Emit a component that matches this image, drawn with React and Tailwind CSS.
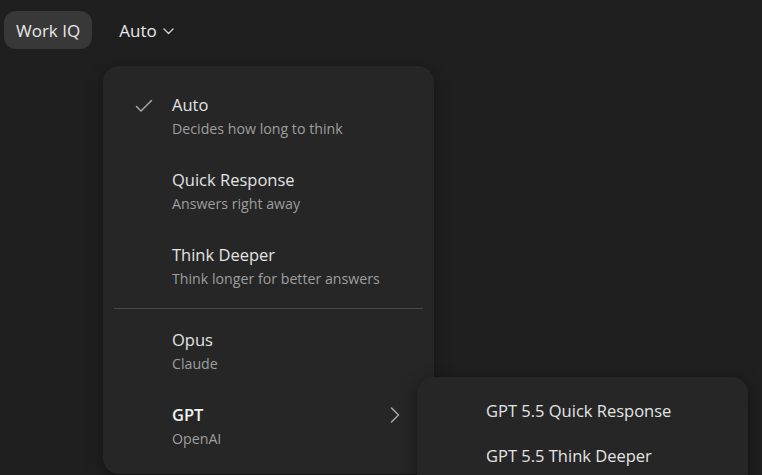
import React from 'react';

const font = { fontFamily: '"Segoe UI", "Open Sans", "Noto Sans", sans-serif' };

const items = [
  { title: 'Auto', sub: 'Decides how long to think', checked: true },
  { title: 'Quick Response', sub: 'Answers right away' },
  { title: 'Think Deeper', sub: 'Think longer for better answers' },
];

const models = [
  { title: 'Opus', sub: 'Claude' },
  { title: 'GPT', sub: 'OpenAI', bold: true, more: true },
];

function Check() {
  return (
    <svg width="18" height="14" viewBox="0 0 18 14" fill="none" stroke="#a6a6a6" strokeWidth="1.5" strokeLinecap="round" strokeLinejoin="round">
      <path d="M1.5 7.5 L6 12 L16.5 1.5" />
    </svg>
  );
}

function MenuItem({ item }) {
  return (
    <div className="flex h-[75px] items-center">
      <div className="flex w-[69px] justify-end pr-[19px] pb-[22px]">
        {item.checked && <Check />}
      </div>
      <div className="flex flex-1 flex-col">
        <span className={`text-[16.5px] leading-[24px] ${item.bold ? 'font-semibold text-[#f2f2f2]' : 'text-[#e3e3e3]'}`}>{item.title}</span>
        <span className="mt-[1px] text-[14.2px] leading-[22px] text-[#9e9e9e]">{item.sub}</span>
      </div>
      {item.more && (
        <svg className="mr-[34px] mb-[24px]" width="10" height="16" viewBox="0 0 10 16" fill="none" stroke="#a8a8a8" strokeWidth="1.5" strokeLinecap="round" strokeLinejoin="round">
          <path d="M1.5 1 L8.5 8 L1.5 15" />
        </svg>
      )}
    </div>
  );
}

export default function App() {
  return (
    <div className="relative h-[475px] w-[762px] overflow-hidden bg-[#1f1f1f]" style={font}>
      {/* Top bar */}
      <div className="flex items-center gap-[27px] pl-[4px] pt-[11px]">
        <div className="flex h-[38px] items-center rounded-[12px] bg-[#383838] px-[12px] pt-[2px] text-[17px] text-[#e8e8e8]">Work IQ</div>
        <div className="flex items-center gap-[6px] pt-[2px] text-[17px] text-[#e8e8e8]">
          Auto
          <svg width="11" height="7" viewBox="0 0 11 7" fill="none" stroke="#cfcfcf" strokeWidth="1.4" strokeLinecap="round" strokeLinejoin="round">
            <path d="M1 1 L5.5 5.5 L10 1" />
          </svg>
        </div>
      </div>

      {/* Mode menu */}
      <div className="absolute left-[103px] top-[66px] w-[331px] rounded-[16px] bg-[#262626] pt-[13px] pb-[10px] shadow-[0_4px_16px_rgba(0,0,0,0.35)]">
        {items.map(item => <MenuItem key={item.title} item={item} />)}
        <div className="mx-[11px] mt-[4px] mb-[5px] h-px bg-[#4a4a4a]" />
        {models.map(item => <MenuItem key={item.title} item={item} />)}
      </div>

      {/* GPT submenu */}
      <div className="absolute left-[417px] top-[377px] w-[331px] rounded-[16px] bg-[#262626] pt-[12px] pb-[10px] shadow-[0_4px_16px_rgba(0,0,0,0.45)]">
        {['GPT 5.5 Quick Response', 'GPT 5.5 Think Deeper'].map(t => (
          <div key={t} className="flex h-[45px] items-center pl-[69px] text-[16.5px] text-[#e3e3e3]">{t}</div>
        ))}
      </div>
    </div>
  );
}
